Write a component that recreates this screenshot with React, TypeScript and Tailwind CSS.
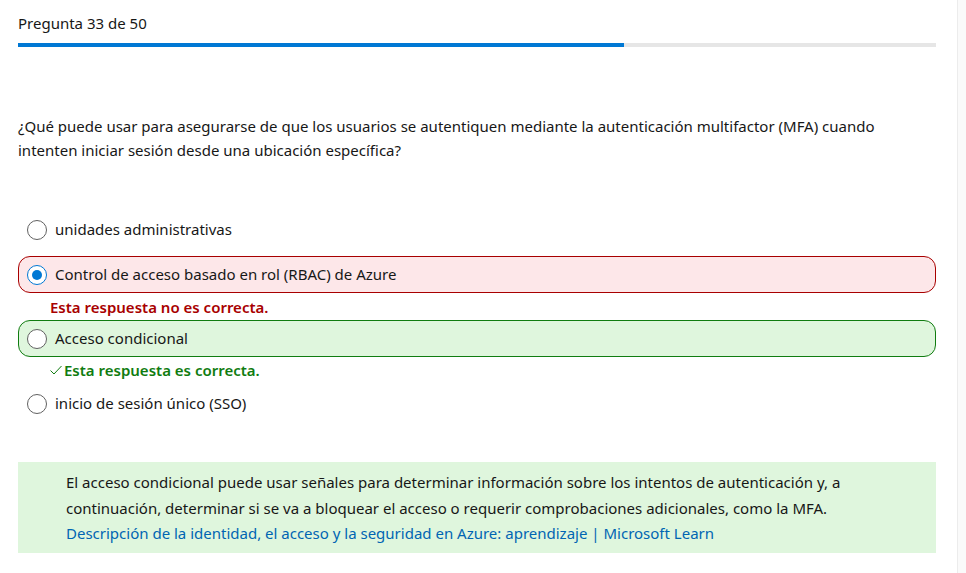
import React from "react";

type Option = { label: string; state: "none" | "wrong" | "right"; checked?: boolean };

const options: Option[] = [
  { label: "unidades administrativas", state: "none" },
  { label: "Control de acceso basado en rol (RBAC) de Azure", state: "wrong", checked: true },
  { label: "Acceso condicional", state: "right" },
  { label: "inicio de sesión único (SSO)", state: "none" },
];

function Radio({ checked }: { checked?: boolean }) {
  return (
    <span
      className={
        "flex h-[20px] w-[20px] shrink-0 items-center justify-center rounded-full border bg-white " +
        (checked ? "border-[#0078d4]" : "border-[#616161]")
      }
    >
      {checked && <span className="h-[10px] w-[10px] rounded-full bg-[#0078d4]" />}
    </span>
  );
}

function OptionRow({ opt }: { opt: Option }) {
  const box =
    opt.state === "wrong"
      ? "border border-[#a80000] bg-[#fde7e9]"
      : opt.state === "right"
        ? "border border-[#107c10] bg-[#dff6dd]"
        : "border border-transparent";
  return (
    <div className={"flex h-[37px] items-center gap-[8px] rounded-[12px] pl-[8px] " + box}>
      <Radio checked={opt.checked} />
      <span className="text-[15px] text-[#171717]">{opt.label}</span>
    </div>
  );
}

export default function App() {
  return (
    <div
      className="flex h-[573px] w-[966px] bg-white"
      style={{ fontFamily: '"Noto Sans", "Open Sans", sans-serif' }}
    >
      <div className="flex w-[957px] flex-col pl-[18px] pr-[21px] pt-[13px]">
        <div className="text-[15px] leading-[20px] text-[#171717]">Pregunta 33 de 50</div>

        {/* progress */}
        <div className="mt-[10px] h-[4px] w-full bg-[#e6e6e6]">
          <div className="h-full bg-[#0078d4]" style={{ width: `${(33 / 50) * 100}%` }} />
        </div>

        <p className="mt-[67px] text-[15px] leading-[24px] text-[#171717]">
          ¿Qué puede usar para asegurarse de que los usuarios se autentiquen mediante la autenticación multifactor
          (MFA) cuando intenten iniciar sesión desde una ubicación específica?
        </p>

        <div className="mt-[49px] flex flex-col">
          <OptionRow opt={options[0]} />
          <div className="mt-[8px]">
            <OptionRow opt={options[1]} />
          </div>
          <div className="mt-[4px] pl-[32px] text-[15px] font-semibold leading-[20px] text-[#a80000]">
            Esta respuesta no es correcta.
          </div>
          <div className="mt-[3px]">
            <OptionRow opt={options[2]} />
          </div>
          <div className="mt-[3px] flex items-center gap-[1px] pl-[31px] text-[15px] font-semibold leading-[20px] text-[#107c10]">
            <svg width="14" height="12" viewBox="0 0 14 12" fill="none">
              <polyline points="1.5,6.5 5,10 12.5,2" stroke="#107c10" strokeWidth="1" />
            </svg>
            Esta respuesta es correcta.
          </div>
          <div className="mt-[5px]">
            <OptionRow opt={options[3]} />
          </div>
        </div>

        <div className="mt-[40px] bg-[#dff6dd] pb-[6px] pl-[48px] pr-[20px] pt-[8px] text-[15px] leading-[25.5px] text-[#171717]">
          <p>
            El acceso condicional puede usar señales para determinar información sobre los intentos de autenticación
            y, a continuación, determinar si se va a bloquear el acceso o requerir comprobaciones adicionales, como
            la MFA.
          </p>
          <p className="text-[#0065b3]">
            Descripción de la identidad, el acceso y la seguridad en Azure: aprendizaje | Microsoft Learn
          </p>
        </div>
      </div>
      <div className="w-[9px] border-l border-[#ececec] bg-[#fafafa]" />
    </div>
  );
}
